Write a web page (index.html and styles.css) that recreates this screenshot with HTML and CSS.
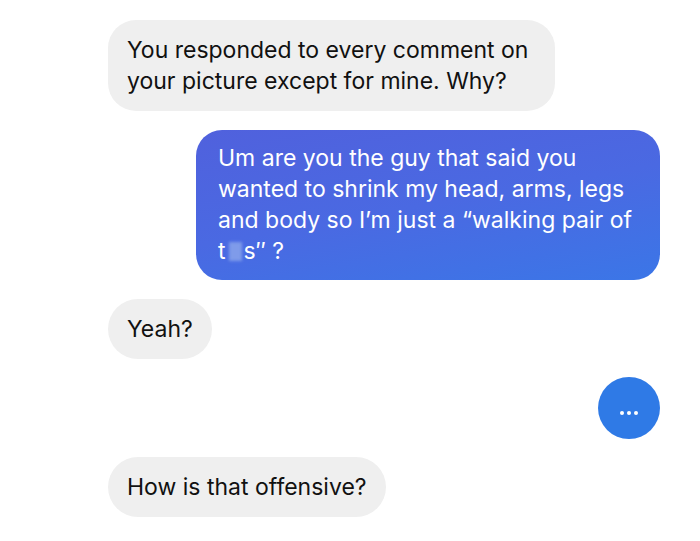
FILE: index.html
```html
<!DOCTYPE html>
<html lang="en">
<head>
    <meta charset="UTF-8">
    <meta name="viewport" content="width=device-width, initial-scale=1.0">
    <title>Messages</title>
    <link rel="stylesheet" href="styles.css">
</head>
<body>
    <div class="thread">
        <div class="msg msg-in msg-first">You responded to every comment on your picture except for mine. Why?</div>

        <div class="msg msg-out">Um are you the guy that said you wanted to shrink my head, arms, legs and body so I’m just a “walking pair of <span class="word">t<span class="censor"></span>s″</span> ?</div>

        <div class="msg msg-in">Yeah?</div>

        <div class="typing">
            <span class="dot"></span><span class="dot"></span><span class="dot"></span>
        </div>

        <div class="msg msg-in">How is that offensive?</div>
    </div>
</body>
</html>
```

FILE: styles.css
```css
body {
    margin: 0;
    background: #fff;
    font-family: Inter, 'Liberation Sans', Arial, sans-serif;
    color: #111;
}
.thread {
    width: 700px;
    height: 541px;
    box-sizing: border-box;
    padding: 20px 40px 0 108px;
    display: flex;
    flex-direction: column;
    align-items: flex-start;
    gap: 19px;
    overflow: hidden;
}
.msg {
    font-size: 23px;
    line-height: 31px;
    padding: 14.5px 19px;
    border-radius: 30px;
    box-sizing: border-box;
}
.msg-in {
    background: #efefef;
}
.msg-first {
    width: 447px;
    border-radius: 28px;
}
.msg-out {
    align-self: flex-end;
    width: 464px;
    padding: 13px 22px;
    border-radius: 26px;
    color: #fff;
    background: linear-gradient(170deg, #5061dd 0%, #4a69e2 50%, #3b76e7 100%);
}
.word {
    white-space: nowrap;
}
.censor {
    display: inline-block;
    width: 13px;
    height: 19px;
    margin: 0 2px -2px 3px;
    background: #7f9bea;
    filter: blur(1.5px);
}
.typing {
    align-self: flex-end;
    width: 62px;
    height: 62px;
    margin-top: -1px;
    margin-bottom: -1px;
    border-radius: 50%;
    background: #2f7ae6;
    display: flex;
    justify-content: center;
    align-items: center;
    gap: 3px;
    padding-top: 10px;
    box-sizing: border-box;
}
.dot {
    width: 4px;
    height: 4px;
    border-radius: 50%;
    background: #fff;
}
```
